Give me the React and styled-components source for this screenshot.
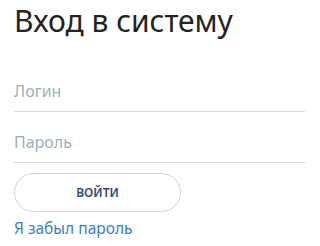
import React from "react";
import styled, { createGlobalStyle } from "styled-components";

const GlobalStyle = createGlobalStyle`
  body {
    margin: 0;
    background: #ffffff;
    font-family: "Noto Sans", "Open Sans", sans-serif;
  }
`;

function App() {
  return (
    <>
      <GlobalStyle />
      <Page>
        <Title>Вход в систему</Title>
        <Form onSubmit={(e) => e.preventDefault()}>
          <Field type="text" placeholder="Логин" />
          <Field type="password" placeholder="Пароль" />
          <Button type="submit">Войти</Button>
        </Form>
        <Forgot href="#">Я забыл пароль</Forgot>
      </Page>
    </>
  );
}

export default App;

const Page = styled.div`
  padding: 0 15px 0 14px;
`;

const Title = styled.h1`
  margin: 0;
  font-size: 30px;
  font-weight: 400;
  line-height: normal;
  color: #232323;
`;

const Form = styled.form`
  display: flex;
  flex-direction: column;
  gap: 12px;
  margin-top: 32px;
`;

const Field = styled.input`
  height: 39px;
  padding: 0 0 3px;
  box-sizing: border-box;
  border: none;
  border-bottom: 1px solid #d3dbe2;
  font-family: inherit;
  font-size: 16px;
  color: #232323;
  outline: none;
  background: transparent;

  &::placeholder {
    color: #a3adb8;
  }
`;

const Button = styled.button`
  width: 167px;
  height: 39px;
  margin-top: -2px;
  box-sizing: border-box;
  border: 1px solid #c9d5df;
  border-radius: 20px;
  background: #ffffff;
  font-family: inherit;
  font-size: 12px;
  font-weight: 600;
  text-transform: uppercase;
  color: #2d4b7a;
  cursor: pointer;
`;

const Forgot = styled.a`
  display: block;
  width: max-content;
  margin-top: 6px;
  font-size: 15.5px;
  line-height: 20px;
  color: #3b7fc4;
  text-decoration: none;
`;
